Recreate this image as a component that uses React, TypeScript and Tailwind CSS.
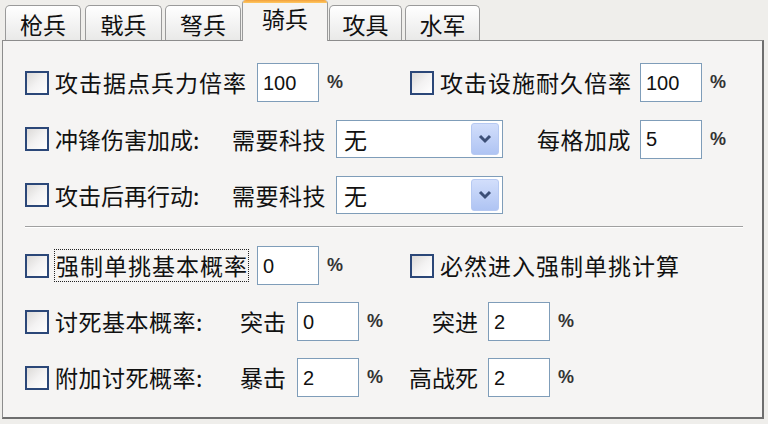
import { ReactNode } from 'react';

const cjk = '[font-family:"Noto_Sans_CJK_SC","Noto_Sans",sans-serif]';

const Checkbox = ({ className = '' }: { className?: string }) => (
  <div
    className={`w-[24px] h-[24px] shrink-0 border-2 border-[#2b4778] bg-gradient-to-br from-[#dcdad8] via-[#f3f2f2] to-[#ffffff] ${className}`}
  />
);

const Label = ({ children, className = '' }: { children: ReactNode; className?: string }) => (
  <span className={`${cjk} text-[23px] leading-none text-[#111] whitespace-nowrap shrink-0 ${className}`}>{children}</span>
);

const NumInput = ({ value, className = '' }: { value: string; className?: string }) => (
  <div
    className={`h-[39px] w-[62px] shrink-0 border border-[#7f9db9] bg-white flex items-center pl-[5px] font-['Liberation_Sans',sans-serif] text-[20px] text-[#111] ${className}`}
  >
    {value}
  </div>
);

const Pct = ({ className = '' }: { className?: string }) => (
  <span className={`font-['Liberation_Sans',sans-serif] text-[18px] font-bold text-[#333] shrink-0 ${className}`}>%</span>
);

const Select = () => (
  <div className="ml-[10px] h-[38px] w-[167px] shrink-0 border border-[#7f9db9] bg-white flex items-center justify-between pl-[7px] pr-[3px]">
    <Label>无</Label>
    <div className="h-[32px] w-[28px] rounded-[3px] border border-[#b6c9f2] bg-gradient-to-b from-[#d2defb] to-[#afc4f3] flex items-center justify-center">
      <svg width="14" height="10" viewBox="0 0 14 10">
        <path d="M2 2 L7 7 L12 2" fill="none" stroke="#3c4f77" strokeWidth="3" />
      </svg>
    </div>
  </div>
);

const tabs = [
  { name: '枪兵', ml: 'ml-[5px]', w: 'w-[76px]' },
  { name: '戟兵', ml: 'ml-[4px]', w: 'w-[77px]' },
  { name: '弩兵', ml: 'ml-[3px]', w: 'w-[76px]' },
  { name: '骑兵', ml: 'ml-[1px]', w: 'w-[86px]', active: true },
  { name: '攻具', ml: 'ml-[1px]', w: 'w-[73px]' },
  { name: '水军', ml: 'ml-[3px]', w: 'w-[75px]' },
];

const App = () => {
  return (
    <div className="w-[768px] h-[424px] bg-[#efeeeb] overflow-hidden">
      {/* Tabs */}
      <div className="flex items-end h-[40px]">
        {tabs.map((t) =>
          t.active ? (
            <div
              key={t.name}
              className={`${t.ml} ${t.w} relative z-10 -mb-px h-[41px] bg-[#f5f4f3] border-x border-[#9a9a9a] rounded-t-[4px] overflow-hidden flex flex-col`}
            >
              <div className="h-[3px] bg-gradient-to-b from-[#f2a03a] to-[#ffc860]" />
              <div className="flex-1 flex justify-center pt-[4px]">
                <Label className="text-[22px]">{t.name}</Label>
              </div>
            </div>
          ) : (
            <div
              key={t.name}
              className={`${t.ml} ${t.w} h-[35px] border border-b-0 border-[#9a9a9a] rounded-t-[5px] bg-gradient-to-b from-[#ffffff] to-[#e9e9e8] flex justify-center pt-[7px]`}
            >
              <Label className="text-[22px]">{t.name}</Label>
            </div>
          )
        )}
      </div>

      {/* Panel */}
      <div className="ml-[2px] w-[762px] h-[379px] border border-[#8c8c8c] border-r-2 border-r-[#6e6e6e] border-b-2 border-b-[#6e6e6e] bg-[#f5f4f3] flex flex-col pt-[22px] pl-[22px]">
        {/* Row 1 */}
        <div className="flex items-center h-[39px]">
          <div className="w-[385px] flex items-center">
            <Checkbox />
            <Label className="ml-[6px] w-[192px] tracking-[1px]">攻击据点兵力倍率</Label>
            <NumInput value="100" className="ml-[10px]" />
            <Pct className="ml-[8px]" />
          </div>
          <Checkbox />
          <Label className="ml-[6px] w-[192px] tracking-[1px]">攻击设施耐久倍率</Label>
          <NumInput value="100" className="ml-[8px]" />
          <Pct className="ml-[8px]" />
        </div>

        {/* Row 2 */}
        <div className="flex items-center h-[38px] mt-[18px]">
          <Checkbox />
          <Label className="ml-[6px] w-[177px]">冲锋伤害加成:</Label>
          <Label className="w-[94px] tracking-[0.5px]">需要科技</Label>
          <Select />
          <Label className="ml-[34px] w-[93px] tracking-[0.5px]">每格加成</Label>
          <NumInput value="5" className="ml-[10px] h-[38px]" />
          <Pct className="ml-[8px]" />
        </div>

        {/* Row 3 */}
        <div className="flex items-center h-[38px] mt-[18px]">
          <Checkbox />
          <Label className="ml-[6px] w-[177px]">攻击后再行动:</Label>
          <Label className="w-[94px] tracking-[0.5px]">需要科技</Label>
          <Select />
        </div>

        {/* Separator */}
        <div className="mt-[12px] mr-[19px] border-t border-[#a0a0a0] border-b border-b-white" />

        {/* Row 4 */}
        <div className="flex items-center h-[39px] mt-[18px]">
          <div className="w-[385px] flex items-center">
            <Checkbox />
            <span className="ml-[5px] w-[195px] border border-dotted border-[#222] pl-px py-[4px] flex">
              <Label className="tracking-[1px]">强制单挑基本概率</Label>
            </span>
            <NumInput value="0" className="ml-[8px]" />
            <Pct className="ml-[8px]" />
          </div>
          <Checkbox />
          <Label className="ml-[6px] tracking-[1px]">必然进入强制单挑计算</Label>
        </div>

        {/* Row 5 */}
        <div className="flex items-center h-[39px] mt-[17px]">
          <div className="w-[383px] flex items-center">
            <Checkbox />
            <Label className="ml-[6px] w-[185px] tracking-[0.5px]">讨死基本概率:</Label>
            <Label className="w-[47px]">突击</Label>
            <NumInput value="0" className="ml-[10px]" />
            <Pct className="ml-[8px]" />
          </div>
          <Label className="w-[70px] text-right">突进</Label>
          <NumInput value="2" className="ml-[10px]" />
          <Pct className="ml-[8px]" />
        </div>

        {/* Row 6 */}
        <div className="flex items-center h-[39px] mt-[17px]">
          <div className="w-[383px] flex items-center">
            <Checkbox />
            <Label className="ml-[6px] w-[185px] tracking-[0.5px]">附加讨死概率:</Label>
            <Label className="w-[47px]">暴击</Label>
            <NumInput value="2" className="ml-[10px]" />
            <Pct className="ml-[8px]" />
          </div>
          <Label className="w-[70px] text-right">高战死</Label>
          <NumInput value="2" className="ml-[10px]" />
          <Pct className="ml-[8px]" />
        </div>
      </div>
    </div>
  );
};

export default App;
